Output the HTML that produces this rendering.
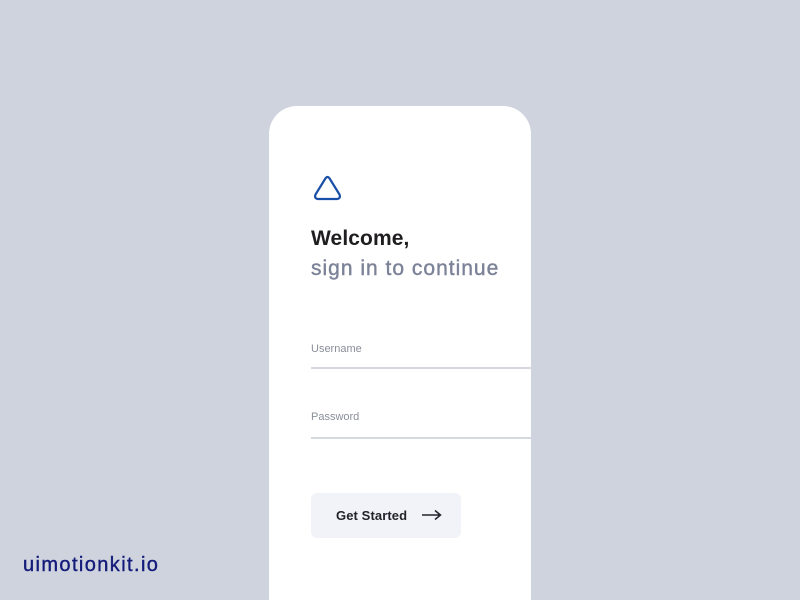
<!DOCTYPE html>
<html><head><style>
html,body{margin:0;width:800px;height:600px;overflow:hidden}
body{background:#cfd3dd;position:relative;font-family:"Liberation Sans",sans-serif}
.card{position:absolute;left:269px;top:106px;width:262px;height:494px;background:#fff;border-radius:28px 28px 0 0}
.t{position:absolute;white-space:nowrap}
</style></head><body>
<div class="card"></div>
<svg class="t" style="left:312px;top:175px" width="32" height="28" viewBox="0 0 32 28"><path d="M13.4 3.5 Q15.5 0.5 17.6 3.5 L27.5 19.5 Q29 23.5 25 24 L6 24 Q2 23.5 3.5 19.5 Z" fill="none" stroke="#1a4fa8" stroke-width="2.2" stroke-linejoin="round"/></svg>
<div class="t" style="left:311px;top:227px;font-size:21px;font-weight:600;color:#1f1d1f;letter-spacing:0.1px">Welcome,</div>
<div class="t" style="left:311px;top:257px;font-size:21px;color:#7c8298;letter-spacing:1px;-webkit-text-stroke:0.4px #7c8298">sign in to continue</div>
<div class="t" style="left:311px;top:343px;font-size:11px;color:#8a8e9a">Username</div>
<div style="position:absolute;left:311px;top:367px;width:220px;height:2px;background:#d6d8df"></div>
<div class="t" style="left:311px;top:411px;font-size:11px;color:#8a8e9a">Password</div>
<div style="position:absolute;left:311px;top:437px;width:220px;height:2px;background:#d6d8df"></div>
<div style="position:absolute;left:311px;top:493px;width:150px;height:45px;background:#f2f3f8;border-radius:6px"></div>
<div class="t" style="left:336px;top:508px;font-size:13px;font-weight:600;color:#23232b;letter-spacing:0.1px">Get Started</div>
<svg class="t" style="left:421px;top:509px" width="22" height="12" viewBox="0 0 22 12"><path d="M1 6 H19 M14 1.5 L19.5 6 L14 10.5" fill="none" stroke="#23232b" stroke-width="1.5"/></svg>
<div class="t" style="left:23px;top:554px;font-size:20px;color:#141c7a;letter-spacing:1.4px;-webkit-text-stroke:0.4px #141c7a">uimotionkit.io</div>
</body></html>
